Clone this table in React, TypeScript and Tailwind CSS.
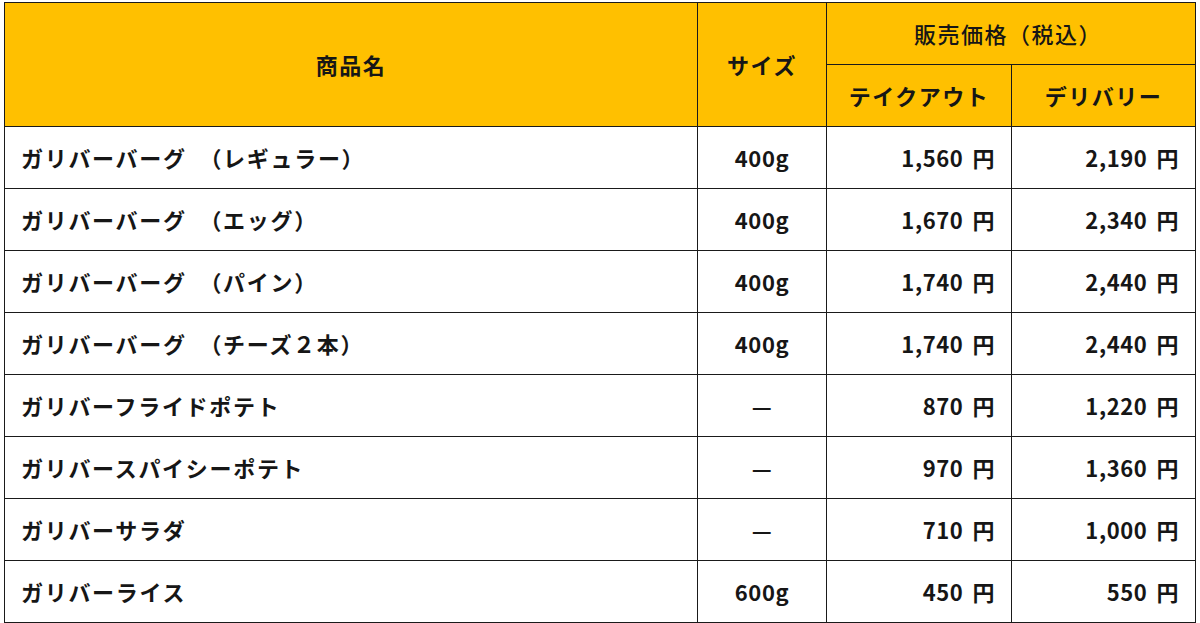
import React from "react";

const rows: [string, string, string, string][] = [
  ["ガリバーバーグ　（レギュラー）", "400g", "1,560", "2,190"],
  ["ガリバーバーグ　（エッグ）", "400g", "1,670", "2,340"],
  ["ガリバーバーグ　（パイン）", "400g", "1,740", "2,440"],
  ["ガリバーバーグ　（チーズ２本）", "400g", "1,740", "2,440"],
  ["ガリバーフライドポテト", "—", "870", "1,220"],
  ["ガリバースパイシーポテト", "—", "970", "1,360"],
  ["ガリバーサラダ", "—", "710", "1,000"],
  ["ガリバーライス", "600g", "450", "550"],
];

function Price({ v }: { v: string }) {
  return (
    <>
      <span>{v}</span>
      <span className="ml-[9px]">円</span>
    </>
  );
}

export default function App() {
  return (
    <div className="w-[1200px] h-[623px] bg-white pt-[2px] pl-[4px]" style={{ fontFamily: '"Noto Sans CJK JP", "Noto Sans", sans-serif' }}>
      <table className="border-collapse w-[1191px] table-fixed text-[22px] font-bold text-[#161616]">
        <colgroup>
          <col className="w-[693px]" />
          <col className="w-[129px]" />
          <col className="w-[185px]" />
          <col className="w-[184px]" />
        </colgroup>
        <thead>
          <tr className="h-[62px] bg-[#FFC000]">
            <th rowSpan={2} className="border border-[#1a1a1a] font-bold text-center align-middle tracking-[1.5px]">商品名</th>
            <th rowSpan={2} className="border border-[#1a1a1a] font-bold text-center align-middle tracking-[1.5px]">サイズ</th>
            <th colSpan={2} className="border border-[#1a1a1a] font-medium text-center align-middle tracking-[1.5px] pr-[6px]">販売価格（税込）</th>
          </tr>
          <tr className="h-[62px] bg-[#FFC000]">
            <th className="border border-[#1a1a1a] font-bold text-center align-middle tracking-[1.5px]">テイクアウト</th>
            <th className="border border-[#1a1a1a] font-bold text-center align-middle tracking-[1.5px]">デリバリー</th>
          </tr>
        </thead>
        <tbody>
          {rows.map((r, i) => (
            <tr key={i} className="h-[62px]">
              <td className="border border-[#1a1a1a] pl-[16px] text-left align-middle tracking-[1.7px]">{r[0]}</td>
              <td className="border border-[#1a1a1a] text-center align-middle tracking-[0.6px]">{r[1]}</td>
              <td className="border border-[#1a1a1a] pr-[16px] text-right align-middle tracking-[0.6px] whitespace-nowrap"><Price v={r[2]} /></td>
              <td className="border border-[#1a1a1a] pr-[16px] text-right align-middle tracking-[0.6px] whitespace-nowrap"><Price v={r[3]} /></td>
            </tr>
          ))}
        </tbody>
      </table>
    </div>
  );
}
